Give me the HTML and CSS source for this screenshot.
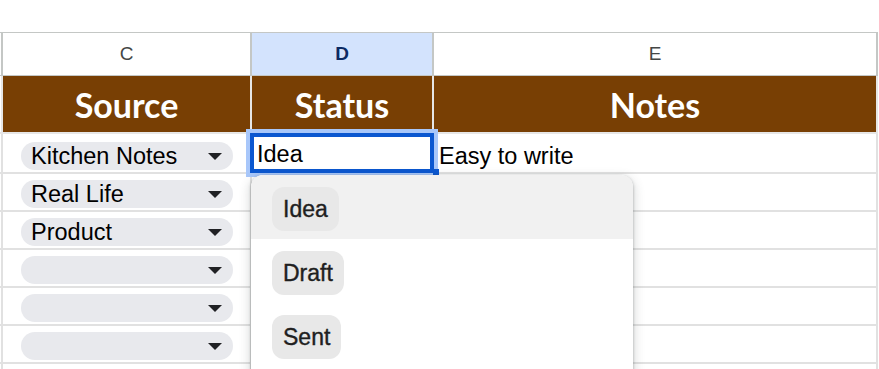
FILE: index.html
```html
<!DOCTYPE html>
<html lang="en">
<head>
    <meta charset="UTF-8">
    <meta name="viewport" content="width=device-width, initial-scale=1.0">
    <title>Sheet</title>
    <link rel="stylesheet" href="styles.css">
</head>
<body>
    <div class="sheet">
        <div class="grid col-heads">
            <div class="corner"></div>
            <div class="col-head">C</div>
            <div class="col-head active">D</div>
            <div class="col-head">E</div>
        </div>

        <div class="grid title-row">
            <div class="edge"></div>
            <div class="title">Source</div>
            <div class="title">Status</div>
            <div class="title">Notes</div>
        </div>

        <div class="grid rows">
            <!-- row 1 -->
            <div class="edge"></div>
            <div class="cell"><span class="chip">Kitchen Notes<span class="arrow"></span></span></div>
            <div class="cell editing">
                Idea
                <div class="selection"><span class="handle"></span></div>
                <!-- Status dropdown -->
                <div class="menu">
                    <div class="menu-item hover"><span class="option">Idea</span></div>
                    <div class="menu-item"><span class="option">Draft</span></div>
                    <div class="menu-item"><span class="option">Sent</span></div>
                </div>
            </div>
            <div class="cell text">Easy to write</div>

            <!-- row 2 -->
            <div class="edge"></div>
            <div class="cell"><span class="chip">Real Life<span class="arrow"></span></span></div>
            <div class="cell"></div>
            <div class="cell"></div>

            <!-- row 3 -->
            <div class="edge"></div>
            <div class="cell"><span class="chip">Product<span class="arrow"></span></span></div>
            <div class="cell"></div>
            <div class="cell"></div>

            <!-- row 4 -->
            <div class="edge"></div>
            <div class="cell"><span class="chip"><span class="arrow"></span></span></div>
            <div class="cell"></div>
            <div class="cell"></div>

            <!-- row 5 -->
            <div class="edge"></div>
            <div class="cell"><span class="chip"><span class="arrow"></span></span></div>
            <div class="cell"></div>
            <div class="cell"></div>

            <!-- row 6 -->
            <div class="edge"></div>
            <div class="cell"><span class="chip"><span class="arrow"></span></span></div>
            <div class="cell"></div>
            <div class="cell"></div>

            <!-- row 7 -->
            <div class="edge"></div>
            <div class="cell"></div>
            <div class="cell"></div>
            <div class="cell"></div>
        </div>
    </div>
</body>
</html>
```

FILE: styles.css
```css
body {
    margin: 0;
    background-color: #fff;
    font-family: 'Liberation Sans', Arial, sans-serif;
    color: #000;
    height: 369px;
    overflow: hidden;
}

.sheet {
    padding-top: 32px;
}

.grid {
    display: grid;
    grid-template-columns: 1px 247px 180px 442px;
    column-gap: 2px;
    width: fit-content;
    padding-right: 2px;
}

/* Column letters */
.col-heads {
    background-color: #c4c7c5;
    padding-top: 1px;
    padding-bottom: 1px;
    grid-template-rows: 42px;
}

.corner {
    background-color: #fff;
}

.col-head {
    background-color: #fff;
    color: #444746;
    font-size: 19px;
    display: flex;
    justify-content: center;
    align-items: center;
}

.col-head.active {
    background-color: #d3e3fd;
    color: #0b2a63;
    font-weight: bold;
}

/* Brown title row */
.title-row {
    background-color: #e6e6e6;
    padding-bottom: 2px;
    grid-template-rows: 56px;
}

.edge {
    background-color: #fff;
}

.title {
    background-color: #783f04;
    color: #fff;
    font-family: 'Lato', sans-serif;
    font-weight: 700;
    font-size: 34px;
    display: flex;
    justify-content: center;
    align-items: center;
}

/* Data rows */
.rows {
    background-color: #e1e1e1;
    row-gap: 2px;
    grid-template-rows: 38px repeat(6, 36px);
}

.cell {
    background-color: #fff;
    font-size: 23.5px;
    line-height: 26px;
    display: flex;
    align-items: flex-end;
}

.text {
    padding: 0 0 3px 5px;
}

.chip {
    display: flex;
    align-items: center;
    justify-content: space-between;
    height: 28px;
    line-height: 28px;
    flex: 1;
    margin: 0 17px 2px 18px;
    padding: 0 11px 0 10px;
    border-radius: 14px;
    background-color: #e8e9ed;
}

.arrow {
    margin-left: auto;
    width: 0;
    height: 0;
    border-left: 7px solid transparent;
    border-right: 7px solid transparent;
    border-top: 7px solid #202124;
}

/* Cell being edited */
.editing {
    position: relative;
    padding: 0 0 5px 5px;
}

.selection {
    position: absolute;
    left: -2px;
    right: -2px;
    top: -1px;
    bottom: -1px;
    border: 4px solid #0b57d0;
    box-shadow: 0 0 0 4px #a8c7fa;
}

.handle {
    position: absolute;
    right: -9px;
    bottom: -6px;
    width: 6px;
    height: 6px;
    background-color: #0b57d0;
}

/* Dropdown */
.menu {
    position: absolute;
    z-index: 2;
    left: -1px;
    top: 41px;
    width: 382px;
    height: 240px;
    background-color: #fff;
    border-radius: 12px;
    overflow: hidden;
    box-shadow: 0 1px 3px rgba(60, 64, 67, 0.4), 0 4px 10px 3px rgba(60, 64, 67, 0.15);
}

.menu-item {
    height: 44px;
    padding: 12px 0 8px 21px;
    display: flex;
}

.menu-item.hover {
    background-color: #f1f1f1;
}

.option {
    display: flex;
    align-items: center;
    height: 44px;
    padding: 0 11px;
    border-radius: 12px;
    background-color: #e8e8e8;
    font-family: 'Liberation Sans', sans-serif;
    font-size: 23px;
    color: #1f1f1f;
    -webkit-text-stroke: 0.4px #1f1f1f;
}
```
